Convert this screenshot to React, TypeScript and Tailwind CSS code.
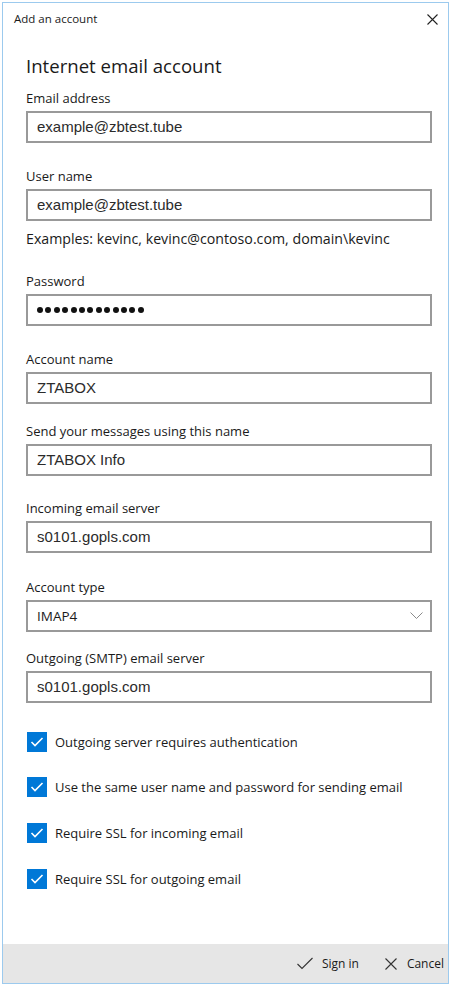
import React from "react";

const ui = { fontFamily: '"Segoe UI", "Open Sans", "Noto Sans", sans-serif' };
const arial = { fontFamily: '"Liberation Sans", Arial, sans-serif' };

function Label({ children, mt }: { children: React.ReactNode; mt: string }) {
  return (
    <div className={`${mt} h-[20px] leading-[20px] text-[13px] text-[#1a1a1a]`} style={ui}>
      {children}
    </div>
  );
}

function Box({ children }: { children: React.ReactNode }) {
  return (
    <div className="mt-[3px] h-[32px] w-[406px] border-2 border-[#999999] bg-white flex items-center pl-[9px] pr-[8px] text-[15px] text-[#2b2b2b]" style={arial}>
      {children}
    </div>
  );
}

function Check({ label, mt }: { label: string; mt: string }) {
  return (
    <div className={`${mt} flex items-center h-[20px]`}>
      <div className="w-[20px] h-[20px] bg-[#0078d7] flex items-center justify-center">
        <svg width="14" height="12" viewBox="0 0 14 12">
          <polyline points="1.5,6 5,9.5 12.5,2" fill="none" stroke="white" strokeWidth="1.6" />
        </svg>
      </div>
      <span className="ml-[8px] text-[13px] text-[#1a1a1a] leading-[20px]" style={ui}>
        {label}
      </span>
    </div>
  );
}

export default function App() {
  return (
    <div className="w-[451px] h-[986px] bg-white p-[2px]">
      <div className="w-full h-full border border-[#9ccaee] flex flex-col bg-white">
        <div className="flex items-center justify-between h-[30px] pl-[11px] pr-[10px]">
          <span className="text-[11.5px] text-[#1a1a1a] mt-[2px]" style={ui}>Add an account</span>
          <svg width="11" height="11" viewBox="0 0 11 11" className="mt-[2px]">
            <path d="M0.5 0.5 L10.5 10.5 M10.5 0.5 L0.5 10.5" stroke="#222" strokeWidth="1.1" />
          </svg>
        </div>
        <div className="flex-1 pl-[23px]">
          <div className="mt-[19px] h-[28px] leading-[28px] text-[18.6px] text-[#1a1a1a]" style={ui}>
            Internet email account
          </div>
          <Label mt="mt-[8px]">Email address</Label>
          <Box>example@zbtest.tube</Box>
          <Label mt="mt-[23px]">User name</Label>
          <Box>example@zbtest.tube</Box>
          <div className="mt-[8px] h-[20px] leading-[20px] text-[14.2px] text-[#1a1a1a]" style={ui}>
            Examples: kevinc, kevinc@contoso.com, domain\kevinc
          </div>
          <Label mt="mt-[22px]">Password</Label>
          <Box>
            <div className="flex gap-[2.4px]">
              {Array.from({ length: 13 }).map((_, i) => (
                <span key={i} className="w-[6px] h-[6px] rounded-full bg-[#111]" />
              ))}
            </div>
          </Box>
          <Label mt="mt-[23px]">Account name</Label>
          <Box>ZTABOX</Box>
          <Label mt="mt-[17px]">Send your messages using this name</Label>
          <Box>ZTABOX Info</Box>
          <Label mt="mt-[22px]">Incoming email server</Label>
          <Box>s0101.gopls.com</Box>
          <Label mt="mt-[24px]">Account type</Label>
          <div className="mt-[3px] h-[32px] w-[406px] border-2 border-[#999999] bg-white flex items-center justify-between pl-[9px] pr-[7px] text-[13.5px] text-[#1a1a1a]" style={ui}>
            <span>IMAP4</span>
            <svg width="13" height="8" viewBox="0 0 13 8">
              <polyline points="0.5,0.5 6.5,6.5 12.5,0.5" fill="none" stroke="#8a8a8a" strokeWidth="1" />
            </svg>
          </div>
          <Label mt="mt-[16px]">Outgoing (SMTP) email server</Label>
          <Box>s0101.gopls.com</Box>
          <div className="pl-[1px]">
            <Check mt="mt-[29px]" label="Outgoing server requires authentication" />
            <Check mt="mt-[25px]" label="Use the same user name and password for sending email" />
            <Check mt="mt-[26px]" label="Require SSL for incoming email" />
            <Check mt="mt-[26px]" label="Require SSL for outgoing email" />
          </div>
        </div>
        <div className="h-[39px] bg-[#e6e6e6] flex items-center justify-end pr-[4px] text-[12px] text-[#1a1a1a]" style={ui}>
          <svg width="16" height="13" viewBox="0 0 16 13">
            <polyline points="0.5,7 5,11.5 15.5,1" fill="none" stroke="#333" strokeWidth="1.1" />
          </svg>
          <span className="ml-[9px]">Sign in</span>
          <svg width="12" height="12" viewBox="0 0 12 12" className="ml-[26px]">
            <path d="M0.5 0.5 L11.5 11.5 M11.5 0.5 L0.5 11.5" stroke="#333" strokeWidth="1.1" />
          </svg>
          <span className="ml-[10px]">Cancel</span>
        </div>
      </div>
    </div>
  );
}
